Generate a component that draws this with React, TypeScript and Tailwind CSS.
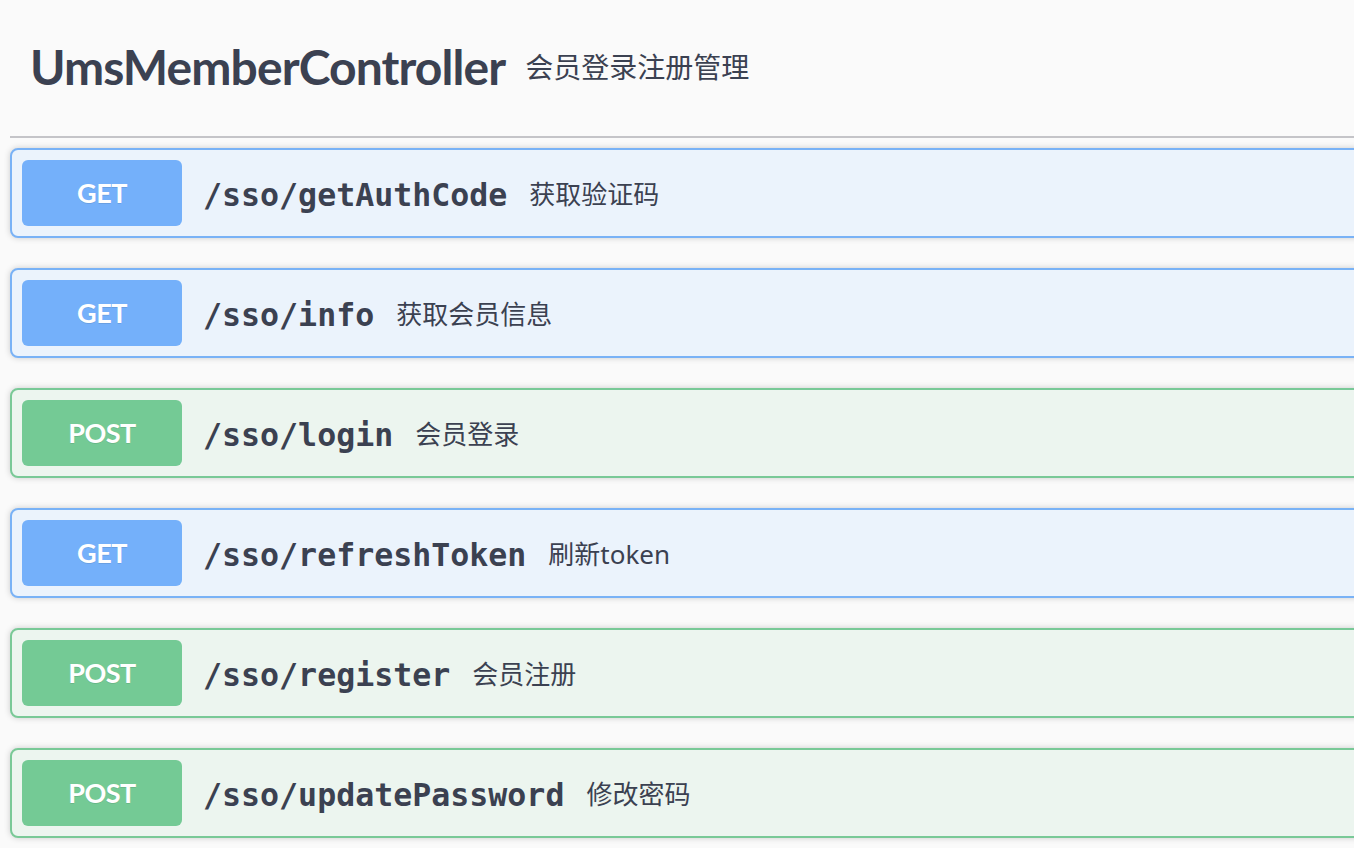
import React from "react";

type Method = "GET" | "POST";

interface Endpoint {
  method: Method;
  path: string;
  summary: string;
}

const endpoints: Endpoint[] = [
  { method: "GET", path: "/sso/getAuthCode", summary: "获取验证码" },
  { method: "GET", path: "/sso/info", summary: "获取会员信息" },
  { method: "POST", path: "/sso/login", summary: "会员登录" },
  { method: "GET", path: "/sso/refreshToken", summary: "刷新token" },
  { method: "POST", path: "/sso/register", summary: "会员注册" },
  { method: "POST", path: "/sso/updatePassword", summary: "修改密码" },
];

const cjk = "font-['Noto_Sans','Noto_Sans_CJK_SC',sans-serif]";

function OpBlock({ method, path, summary }: Endpoint) {
  const isGet = method === "GET";

  return (
    <div
      className={
        isGet
          ? "mb-[30px] flex h-[90px] items-center rounded-[8px] border-2 border-[#79b2f6] bg-[#ebf3fc] p-[10px] shadow-[0_0_6px_rgba(0,0,0,0.19)]"
          : "mb-[30px] flex h-[90px] items-center rounded-[8px] border-2 border-[#79c997] bg-[#ecf5ef] p-[10px] shadow-[0_0_6px_rgba(0,0,0,0.19)]"
      }
    >
      {/* Method badge */}
      <div
        className={
          isGet
            ? "flex h-[66px] w-[160px] shrink-0 items-center justify-center rounded-[6px] bg-[#74b0fa] font-['Lato',sans-serif] text-[27px] font-bold tracking-[-0.5px] text-white [text-shadow:0_1px_0_rgba(0,0,0,0.1)]"
            : "flex h-[66px] w-[160px] shrink-0 items-center justify-center rounded-[6px] bg-[#74ca95] font-['Lato',sans-serif] text-[27px] font-bold tracking-[-0.5px] text-white [text-shadow:0_1px_0_rgba(0,0,0,0.1)]"
        }
      >
        {method}
      </div>

      {/* Path */}
      <span className="pt-[5px] pl-[21px] pr-[22px] font-['DejaVu_Sans_Mono',monospace] text-[31.6px] font-bold text-[#3b4151]">
        {path}
      </span>

      {/* Summary */}
      <span className={`${cjk} pt-[3px] text-[26px] text-[#3b4151]`}>{summary}</span>
    </div>
  );
}

export default function App() {
  return (
    <div className="min-h-screen w-full overflow-hidden bg-[#fafafa]">
      <div className="-mr-[30px] pl-[10px]">
        {/* Tag header */}
        <div className="flex h-[138px] items-center border-b-2 border-[#c4c4c8] pl-[20px] pb-[2px]">
          <h4 className="font-['Lato',sans-serif] text-[48px] font-bold tracking-[-0.9px] text-[#3b4151]">
            UmsMemberController
          </h4>
          <small className={`${cjk} pl-[20px] text-[28px] text-[#3b4151]`}>
            会员登录注册管理
          </small>
        </div>

        {/* Operations */}
        <div className="pt-[10px]">
          {endpoints.map((e) => (
            <OpBlock key={e.path} {...e} />
          ))}
        </div>
      </div>
    </div>
  );
}
